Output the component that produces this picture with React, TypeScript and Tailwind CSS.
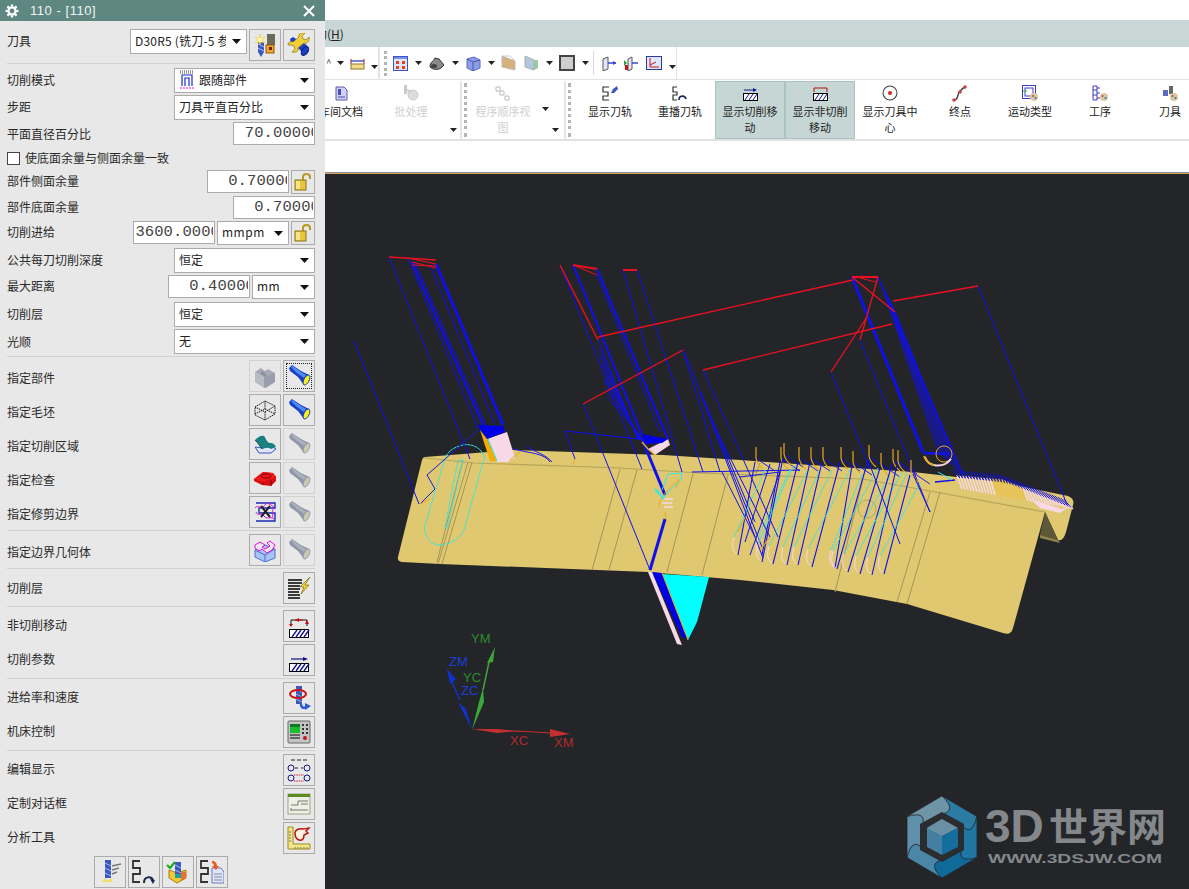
import React from "react";

type N = React.ReactNode;
const S = ({ children, size = 24, box = "0 0 24 24" }: { children: N; size?: number; box?: string }) => (
  <svg width={size} height={size} viewBox={box} className="block shrink-0">{children}</svg>
);

const Caret = () => (
  <svg width="9" height="5" viewBox="0 0 9 5" className="block shrink-0"><path d="M0 0h9L4.5 5z" fill="#111" /></svg>
);
const Mini = () => (
  <svg width="7" height="4" viewBox="0 0 7 4" className="block shrink-0"><path d="M0 0h7L3.5 4z" fill="#222" /></svg>
);

const Flash = ({ off }: { off?: boolean }) => (
  <S>
    <path d="M2 4 5 1 14 7l8 4-5 10-6-8-8-6z" fill={off ? "#8f97a8" : "#1a3fc8"} />
    <path d="M4 3 5.500 2 14 8l5 3-2 3-7-5z" fill={off ? "#aab0bd" : "#4d8cf0"} />
    <ellipse cx="19.500" cy="16" rx="5.500" ry="2.600" transform="rotate(-63 19.500 16)" fill={off ? "#c9cbb0" : "#f3ef2a"} stroke={off ? "#8f97a8" : "#13309a"} strokeWidth=".8" />
  </S>
);
const Block = () => (
  <S>
    <path d="M2 8l6-4 4 3 3-2 7 4v9l-9 6-11-6z" fill="#a7abb8" />
    <path d="M2 8l9 5v11L2 18z" fill="#b8bcc6" />
    <path d="M11 13l11-4v9l-11 6z" fill="#9a9eac" />
    <path d="M8 7l5 3v3l-5-3z" fill="#8a8e9c" />
  </S>
);
const Wire = () => (
  <S>
    <path d="M2 9l10-6 10 5v8l-10 6-10-5zM2 9l10 5 10-6M12 14v8M2 16l10-5 10 5M12 3v8" fill="none" stroke="#111" strokeWidth="1" strokeDasharray="1.400 .8" />
  </S>
);
const Surface = () => (
  <S>
    <path d="M2 15 6 21h12l5-4-5-3-8 2z" fill="#dfe6fb" stroke="#3a54c8" />
    <path d="M2 8c3-3 6-5 9-4 2 2 2 6 6 7 2 0 4 0 6 4l-5 2c-4-2-5-1-9 0-2-3-4-6-7-9z" fill="#1a8080" />
    <path d="M2 8c3 3 5 6 7 9" stroke="#0a5050" fill="none" />
  </S>
);
const Chip = () => (
  <S>
    <path d="M1 13 10 6l10 1 3 4v4l-5 5-9-1-8-4z" fill="#d80f0f" />
    <path d="M1 13l9 3 13-5-3-4-10-1z" fill="#f01818" />
    <ellipse cx="13" cy="10" rx="5" ry="2" fill="none" stroke="#7a0000" />
    <path d="M10 16v3M18 14v6" stroke="#8a0000" />
  </S>
);
const Trim = () => (
  <S>
    <path d="M3 3h19v5H6v5h16v8H3" fill="none" stroke="#1a2bb8" strokeWidth="1.400" />
    <path d="M2 8c3-4 6 2 9-2s4-3 10 1M3 12c2 5 5 0 8 4s6 0 10 3M21 8c-3 3 0 6-2 10" fill="none" stroke="#e014d8" strokeWidth="1" />
    <path d="M8 6l9 11M17 6 8 17" stroke="#222" strokeWidth="2" />
  </S>
);
const BoundGeo = () => (
  <S>
    <path d="M2 12 12 7l10 4v9l-10 4-10-5z" fill="#a9c4f3" stroke="#4c6fd0" />
    <path d="M2 12l10 5 10-6M12 17v7" fill="none" stroke="#4c6fd0" />
    <path d="M2 7l5-3 5 3-3 2 3 2 5-3-3-3 3-2 5 4-3 5-5 3-5-4-3 2-4-3z" fill="#f4e4f6" stroke="#e014d8" />
  </S>
);
const Layers = () => (
  <S>
    <path d="M1 4h14M1 7h14M1 10h12M1 13h12M1 16h11M1 19h12M1 22h12" stroke="#000" strokeWidth="1.600" />
    <path d="M23 1 13 11h4l-3 7 8-9h-4z" fill="#f0cf30" stroke="#6a5a10" strokeWidth=".6" />
  </S>
);
const Hatch = () => (
  <>
    <rect x="3.500" y="16.500" width="19" height="8" fill="#fff" stroke="#000" />
    <path d="M6 24l5-7M10 24l5-7M14 24l5-7M18 24l5-7" stroke="#12128a" strokeWidth="1.300" />
  </>
);
const NonCut = () => (
  <S box="0 0 26 26" size={26}>
    <Hatch />
    <path d="M5 7h16M5 7v6M21 7v6" stroke="#111" fill="none" />
    <path d="M9 7l4-2v4zM3 11h4l-2 3zM19 11h4l-2-4z" fill="#c80f0f" />
    <path d="M9 7h8" stroke="#c80f0f" />
  </S>
);
const CutParam = () => (
  <S box="0 0 26 26" size={26}>
    <Hatch />
    <path d="M5 12h14" stroke="#12128a" strokeWidth="1.200" />
    <path d="M17 10l5 2-5 2z" fill="#12128a" />
  </S>
);
const Feed = () => (
  <S>
    <rect x="9" y="0" width="6" height="18" fill="#4058b8" />
    <path d="M9 3l6 3M9 8l6 3M9 13l6 3" stroke="#9aa8e0" />
    <ellipse cx="11" cy="8" rx="8" ry="4" fill="none" stroke="#c81414" strokeWidth="2" />
    <path d="M14 18c0 5 4 4 6 3" stroke="#2a5ad8" strokeWidth="2.400" fill="none" />
    <path d="M18 17l6 3-6 4z" fill="#2a5ad8" />
  </S>
);
const Machine = () => (
  <S>
    <rect x="1" y="1" width="22" height="22" rx="1" fill="#c4c4c4" stroke="#666" />
    <rect x="3" y="4" width="10" height="9" fill="#18c030" />
    <rect x="3" y="4" width="10" height="3" fill="#0b7a20" />
    <path d="M15 4h2v2h-2zM19 4h2v2h-2zM15 8h2v2h-2zM19 8h2v2h-2zM15 12h2v2h-2zM19 12h2v2h-2z" fill="#333" />
    <path d="M3 15h10M3 18h10" stroke="#444" strokeWidth="1.500" />
    <circle cx="18" cy="18" r="2" fill="#c81414" />
  </S>
);
const EditShow = () => (
  <S>
    <path d="M4 2h4M10 2h4M16 2h4" stroke="#222" />
    <circle cx="4" cy="10" r="3" fill="none" stroke="#12128a" /><circle cx="20" cy="10" r="3" fill="none" stroke="#12128a" />
    <path d="M8 10h3M14 10h2" stroke="#222" />
    <circle cx="4" cy="20" r="3" fill="none" stroke="#12128a" /><circle cx="20" cy="20" r="3" fill="none" stroke="#12128a" />
    <path d="M7 17h10M7 23h10" stroke="#d01010" strokeDasharray="1.400 1" />
  </S>
);
const Dialog = () => (
  <S>
    <rect x="1" y="2" width="22" height="20" fill="#eef0e4" stroke="#9aa888" />
    <rect x="1" y="2" width="22" height="3" fill="#5a8a20" />
    <path d="M4 13h7v-4h10M4 18h17M4 19v-3M14 12h7" fill="none" stroke="#777" />
  </S>
);
const Analysis = () => (
  <S>
    <path d="M1 1h5v17h17v5H1z" fill="#f5e68a" stroke="#a08a20" />
    <path d="M8 21v2M11 21v2M14 21v2M17 21v2M20 21v2M2 6h2M2 9h2M2 12h2M2 15h2" stroke="#775" />
    <path d="M8 7c0-3 4-5 8-4 2 0 5-1 6-1l-3 3 2 2-4 2c0 4-2 6-5 5-3-1-4-4-4-7z" fill="#fff4e0" stroke="#c01010" strokeWidth="1.500" />
  </S>
);
const NewTool = () => (
  <S>
    <path d="M5 9h6v10l-3 5-3-5z" fill="#3a58c0" />
    <path d="M5 11l6 3M5 15l6 3" stroke="#a8b8f0" />
    <rect x="14" y="1" width="8" height="11" fill="#6b6b5a" />
    <rect x="13" y="12" width="8" height="8" fill="#f0a830" stroke="#8a5a10" />
    <rect x="16" y="14" width="3" height="3" fill="#702010" />
    <path d="M7 1l1 4 4-1-3 3 3 3-4-1-1 3-1-3-4 1 3-3-3-3 4 1z" fill="#fff8a0" stroke="#e8c020" strokeWidth=".5" />
  </S>
);
const Wrench = () => (
  <S>
    <path d="M3 6 6 4 14 9l6 3-3 9-6-6-7-5z" fill="#1a3fc8" />
    <ellipse cx="18" cy="18" rx="5" ry="3" transform="rotate(-55 18 18)" fill="#1840c0" stroke="#0a1a70" />
    <path d="M1 12c0-3 3-4 5-3l6-5c-1-3 2-5 6-4l-3 3 1 3 3 1 3-3c1 4-2 7-5 6l-6 5c1 3-2 5-6 4l3-3-1-3-3-1z" fill="#f3cf36" stroke="#8a7010" strokeWidth=".7" />
  </S>
);
const Lock = () => (
  <S size={20} box="0 0 20 20">
    <path d="M10 8V5c0-4 7-4 7 0v2" fill="none" stroke="#b69a20" strokeWidth="2" />
    <rect x="2" y="8" width="11" height="10" fill="#e8c63c" stroke="#8a7010" />
    <rect x="3" y="9" width="4" height="8" fill="#f5e58a" />
  </S>
);
const BotA = () => (
  <S>
    <rect x="7" y="0" width="6" height="18" fill="#3a58c0" />
    <path d="M7 3l6 3M7 8l6 3M7 13l6 3" stroke="#a8b8f0" />
    <path d="M14 6l9-2M14 10l7-2M14 14l5-2" stroke="#777" strokeWidth="1.400" />
    <path d="M4 22l3-4 3 3 3-3 2 4z" fill="#f0e060" />
  </S>
);
const SPath = ({ x = 0, w = 1.8, c = "#333" }: { x?: number; w?: number; c?: string }) => (
  <path d={`M${x + 8} 1H${x + 1}v7h7v6H${x + 1}v8h7`} fill="none" stroke={c} strokeWidth={w} />
);
const BotB = () => (
  <S>
    <SPath />
    <path d="M12 23c0-7 7-7 9-3" fill="none" stroke="#1a2450" strokeWidth="2" />
    <path d="M18 19l5 1-2 4z" fill="#1a2450" />
  </S>
);
const BotC = () => (
  <S>
    <path d="M3 18V10l8 3 9-3v8l-9 5z" fill="#f0c830" stroke="#a08010" />
    <rect x="9" y="2" width="6" height="15" fill="#3a58c0" />
    <path d="M9 5l6 3M9 10l6 3" stroke="#a8b8f0" />
    <path d="M9 14h6v4H9z" fill="#20a0a0" />
    <path d="M15 12h5v6l-5 3z" fill="#e87030" />
    <path d="M1 5l3 3 5-6" fill="none" stroke="#18a818" strokeWidth="2" />
  </S>
);
const BotD = () => (
  <S>
    <SPath />
    <path d="M12 8h9l3 4v11H12z" fill="#dfe6fb" stroke="#6a7ac0" />
    <path d="M14 14h8M14 17h8M14 20h8" stroke="#889" />
    <path d="M12 1c3 0 5 2 5 5h2l-3 4-4-4h2c0-1-1-3-2-3z" fill="#e85a20" />
  </S>
);

const Btn = ({ children, off, focus }: { children?: N; off?: boolean; focus?: boolean }) => (
  <div className={`relative w-8 h-8 shrink-0 flex items-center justify-center border ${off ? "border-[#d2d2d2]" : "border-[#ababab]"}`}>
    {focus && <div className="absolute inset-[2px] border border-dotted border-[#222]" />}
    {children}
  </div>
);

const Sel = ({ w, h = "h-[25px]", children, mono }: { w: string; h?: string; children: N; mono?: boolean }) => (
  <div className={`${w} ${h} shrink-0 bg-white border border-[#ababab] flex items-center pl-[4px] pr-[5px] gap-[2px] overflow-hidden`}>
    <div className={`flex-1 min-w-0 flex items-center gap-[4px] overflow-hidden whitespace-nowrap text-[#222] pb-[2px] ${mono ? "text-[12px] tracking-[0.5px]" : "text-[12px]"}`}>{children}</div>
    <Caret />
  </div>
);

const Num = ({ w, v, h = "h-[23px]" }: { w: string; v: string; h?: string }) => (
  <div className={`${w} ${h} shrink-0 bg-white border border-[#ababab] flex items-center pr-[1px]`}>
    <div className="flex-1 min-w-0 h-full overflow-hidden flex justify-end items-center pt-[1px]">
      <span className="font-['Liberation_Mono',monospace] text-[15.5px] tracking-[0.1px] text-[#444] whitespace-nowrap mr-[-7px]">{v}0</span>
    </div>
  </div>
);

const LockBtn = () => (
  <div className="w-6 h-6 shrink-0 border border-[#ababab] flex items-center justify-center"><Lock /></div>
);

const Row = ({ h, label, lift = "pb-[4px]", children }: { h: string; label: N; lift?: string; children?: N }) => (
  <div className={`${h} flex items-start gap-[2px] shrink-0`}>
    <span className={`self-center mr-auto text-[12px] leading-none text-[#2a2a2a] whitespace-nowrap ${lift}`}>{label}</span>
    {children}
  </div>
);

const Sep = ({ mb = "mb-[3px]" }: { mb?: string }) => <div className={`h-px bg-[#d2d2d2] shrink-0 ${mb}`} />;

const BtnRow = ({ label, a, b, aOff, bOff, focus, lift = "pt-[2px]" }: { label: N; a?: N; b: N; aOff?: boolean; bOff?: boolean; focus?: boolean; lift?: string }) => (
  <Row h="h-[34px]" label={label} lift={lift}>
    {a && <Btn off={aOff}>{a}</Btn>}
    <Btn off={bOff} focus={focus}>{b}</Btn>
  </Row>
);

const ModeIcon = () => (
  <svg width="16" height="19" viewBox="0 0 16 19" className="block shrink-0">
    <path d="M1 1h14M1 3h14" stroke="#333" strokeDasharray="1 1" />
    <path d="M3 16V5h10v11M6 16V8h4v8" fill="none" stroke="#1a2bd0" strokeWidth="1.200" />
    <path d="M1 18h14" stroke="#e010e0" strokeDasharray="2 1" />
  </svg>
);

const Panel = () => (
  <aside className="w-[325px] h-[889px] shrink-0 bg-[#e8e8e8] flex flex-col font-['Noto_Sans_CJK_SC','Liberation_Sans',sans-serif] overflow-hidden">
    <div className="h-[21px] shrink-0 bg-[#5d8780] flex items-center pl-[5px] pr-[10px] text-white">
      <svg width="14" height="14" viewBox="0 0 14 14" className="block">
        <circle cx="7" cy="7" r="3.600" fill="none" stroke="#fff" strokeWidth="2.400" />
        <path d="M7 .5v2M7 11.500v2M.5 7h2M11.500 7h2M2.400 2.400l1.400 1.400M10.200 10.200l1.400 1.400M2.400 11.600l1.400-1.400M10.200 3.800l1.400-1.400" stroke="#fff" strokeWidth="2.200" />
      </svg>
      <span className="ml-[11px] font-['Liberation_Sans',sans-serif] text-[13px] tracking-[0.55px] text-[#f0f5f4]">110 - [110]</span>
      <svg width="12" height="12" viewBox="0 0 12 12" className="block ml-auto"><path d="M1 1l10 10M11 1 1 11" stroke="#fff" strokeWidth="2" /></svg>
    </div>
    <div className="flex flex-col pl-[7px] pr-[10px] pt-2 flex-1">
      <Row h="h-8" label="刀具" lift="pb-[8px]">
        <div className="w-[117px] h-[25px] bg-white border border-[#ababab] flex items-center pl-[4px] pr-[5px] shrink-0">
          <div className="flex-1 min-w-0 overflow-hidden whitespace-nowrap text-[12px] text-[#222] tracking-[0.2px] mr-[6px] pb-[1px]">D30R5 (铣刀-5 参数)</div>
          <Caret />
        </div>
        <Btn><NewTool /></Btn>
        <Btn><Wrench /></Btn>
      </Row>
      <div className="mt-[2px]"><Sep mb="mb-[4px]" /></div>
      <Row h="h-[27px]" label="切削模式"><Sel w="w-[141px]"><ModeIcon /><span>跟随部件</span></Sel></Row>
      <Row h="h-[27px]" label="步距" lift="pb-[3px]"><Sel w="w-[141px]">刀具平直百分比</Sel></Row>
      <Row h="h-[27px]" label="平面直径百分比"><Num w="w-[82px]" v="70.0000" /></Row>
      <div className="h-[21px] shrink-0 flex items-center gap-[5px] pb-[3px]">
        <div className="w-[13px] h-[13px] bg-white border border-[#444]" />
        <span className="text-[12px] leading-none text-[#2a2a2a]">使底面余量与侧面余量一致</span>
      </div>
      <Row h="h-[26px]" label="部件侧面余量"><Num w="w-[82px]" v="0.7000" /><LockBtn /></Row>
      <Row h="h-[25px]" label="部件底面余量"><Num w="w-[82px]" v="0.7000" /></Row>
      <Row h="h-[27px]" label="切削进给" lift="pb-[5px]"><Num w="w-[82px]" v="3600.000" /><Sel w="w-[72px]" h="h-[24px]" mono>mmpm</Sel><LockBtn /></Row>
      <Row h="h-[27px]" label="公共每刀切削深度"><Sel w="w-[141px]">恒定</Sel></Row>
      <Row h="h-[27px]" label="最大距离" lift="pb-[5px]"><Num w="w-[82px]" v="0.4000" /><Sel w="w-[63px]" h="h-[24px]" mono>mm</Sel></Row>
      <Row h="h-[27px]" label="切削层"><Sel w="w-[141px]">恒定</Sel></Row>
      <Row h="h-[27px]" label="光顺" lift="pb-[2px]"><Sel w="w-[141px]">无</Sel></Row>
      <Sep />
      <BtnRow label="指定部件" a={<Block />} aOff b={<Flash />} focus />
      <BtnRow label="指定毛坯" a={<Wire />} b={<Flash />} />
      <BtnRow label="指定切削区域" a={<Surface />} b={<Flash off />} bOff />
      <BtnRow label="指定检查" a={<Chip />} b={<Flash off />} bOff />
      <BtnRow label="指定修剪边界" a={<Trim />} b={<Flash off />} bOff />
      <Sep />
      <BtnRow label="指定边界几何体" a={<BoundGeo />} b={<Flash off />} bOff />
      <Sep />
      <BtnRow label="切削层" b={<Layers />} lift="pb-[2px]" />
      <Sep />
      <BtnRow label="非切削移动" b={<NonCut />} lift="pb-[4px]" />
      <BtnRow label="切削参数" b={<CutParam />} lift="pb-[4px]" />
      <Sep />
      <BtnRow label="进给率和速度" b={<Feed />} lift="pb-[4px]" />
      <BtnRow label="机床控制" b={<Machine />} lift="pb-[4px]" />
      <Sep />
      <BtnRow label="编辑显示" b={<EditShow />} lift="pb-[4px]" />
      <BtnRow label="定制对话框" b={<Dialog />} lift="pb-[4px]" />
      <BtnRow label="分析工具" b={<Analysis />} lift="pb-[4px]" />
      <div className="flex gap-[2px] pl-[87px]">
        <Btn><BotA /></Btn><Btn><BotB /></Btn><Btn><BotC /></Btn><Btn><BotD /></Btn>
      </div>
    </div>
  </aside>
);

const Grip = () => (
  <div className="w-[3px] h-[25px] shrink-0 border-l-[3px] border-dotted border-[#b5b5b5]" />
);

const Toolbar = () => (
  <div className="h-[33px] shrink-0 bg-white flex items-stretch border-b border-[#e4e4e4]">
    <div className="w-[55px] shrink-0 flex items-center border-r-2 border-[#e4e4e4] overflow-hidden">
      <span className="w-[10px] ml-[1px] text-[10px] leading-none text-[#444]">^</span>
      <div className="ml-[1px]"><Mini /></div>
      <div className="ml-[6px]">
        <svg width="15" height="15" viewBox="0 0 15 15" className="block"><path d="M1 3v5M14 3v5" stroke="#c01818" /><path d="M1 5h13" stroke="#1a2bb8" strokeWidth="1.200" /><rect x="1" y="8" width="13" height="5" fill="#f3dc8a" stroke="#8a7a30" /></svg>
      </div>
      <div className="ml-[6px] mt-2"><Mini /></div>
    </div>
    <div className="w-[2px] shrink-0 bg-white" />
    <div className="w-[295px] shrink-0 flex items-center pl-[2px] border-r border-[#e4e4e4]">
      <Grip />
      <div className="ml-[6px]">
        <svg width="15" height="15" viewBox="0 0 15 15" className="block"><rect x=".5" y=".5" width="14" height="14" fill="#dfe6fb" stroke="#3a54c8" /><rect x="1" y="1" width="13" height="2" fill="#7a8fe0" /><path d="M3 5h3v3H3zM9 5h3v3H9zM3 10h3v3H3zM9 10h3v3H9z" fill="#e84020" /></svg>
      </div>
      <div className="ml-[7px]"><Mini /></div>
      <div className="ml-[7px]">
        <svg width="16" height="14" viewBox="0 0 16 14" className="block"><path d="M1 11c0-5 3-5 5-9l4 1 5 6-3 3c-3 2-8 2-11-1z" fill="#8a8a8a" stroke="#333" /><ellipse cx="5" cy="10" rx="3" ry="2" fill="#444" /></svg>
      </div>
      <div className="ml-[7px]"><Mini /></div>
      <div className="ml-[7px]">
        <svg width="15" height="15" viewBox="0 0 15 15" className="block"><path d="M1 3l7-2 6 3v8l-7 3-6-3z" fill="#8a9ee8" stroke="#5a6ac0" /><path d="M1 3l6 3 7-2M7 6v9" fill="none" stroke="#4a58b0" /></svg>
      </div>
      <div className="ml-[7px]"><Mini /></div>
      <div className="ml-[6px]">
        <svg width="15" height="16" viewBox="0 0 15 16" className="block"><path d="M1 1l13 5v9L1 12z" fill="#d8b07a" stroke="#bbb" /><path d="M1 1l8 0 5 5" fill="none" stroke="#ccc" /></svg>
      </div>
      <div className="ml-[8px]">
        <svg width="15" height="16" viewBox="0 0 15 16" className="block"><path d="M1 1l9 4v10L1 12z" fill="#b0c8e0" stroke="#aaa" /><path d="M10 5l4 0v8l-4 2z" fill="#9ac8a0" /></svg>
      </div>
      <div className="ml-[7px]"><Mini /></div>
      <div className="ml-[6px] w-4 h-4 bg-[#cfcfcf] border-2 border-[#444]" />
      <div className="ml-[7px]"><Mini /></div>
      <div className="ml-[4px] w-px h-[24px] bg-[#dcdcdc]" />
      <div className="ml-[8px]">
        <svg width="15" height="15" viewBox="0 0 15 15" className="block"><path d="M1 3l5-2v12l-5 2z" fill="#dfe6fb" stroke="#555" /><path d="M6 7h8" stroke="#2a3ad8" strokeWidth="1.400" /><path d="M11 5l3 2-3 2z" fill="#2a3ad8" /></svg>
      </div>
      <div className="ml-[6px]">
        <svg width="16" height="15" viewBox="0 0 16 15" className="block"><path d="M5 3l4-2v12l-4 2z" fill="#dfe6fb" stroke="#555" /><path d="M9 7h6" stroke="#2a3ad8" strokeWidth="1.400" /><path d="M1 4l3 3-3 3z" fill="#18a838" /><path d="M2 9h3v5H2z" fill="#c81414" /></svg>
      </div>
      <div className="ml-[7px]">
        <svg width="16" height="14" viewBox="0 0 16 14" className="block"><rect x=".5" y=".5" width="15" height="13" fill="#dfe6fb" stroke="#2a3a98" /><path d="M4 2v9h9" stroke="#c81414" fill="none" /><path d="M4 9l6-3" stroke="#c81414" /></svg>
      </div>
      <div className="ml-[7px] mt-2"><Mini /></div>
    </div>
  </div>
);

const RB = ({ icon, lines, active, off, w = "w-[70px]" }: { icon: N; lines: string[]; active?: boolean; off?: boolean; w?: string }) => (
  <div className={`${w} shrink-0 h-[58px] flex flex-col items-center pt-[2px] border ${active ? "bg-[#c6d6d4] border-[#a8c4c0]" : "border-transparent"} ${off ? "text-[#cfcfcf]" : "text-[#222]"}`}>
    <div className="h-[18px] flex items-center justify-center">{icon}</div>
    <div className="mt-[1px] text-center text-[11px] leading-4 whitespace-nowrap">
      {lines.map((l) => <div key={l}>{l}</div>)}
    </div>
  </div>
);

const Multi = ({ a = "#3a3ac0" }: { a?: string }) => (
  <svg width="17" height="17" viewBox="0 0 17 17" className="block">
    <path d="M1 1h4v14H1zM1 5h4M1 10h4M5 3h3M5 8h3M5 13h3" fill="#fff" stroke={a} />
    <circle cx="12" cy="12" r="4" fill="#d8c8a0" />
    <circle cx="10.500" cy="11" r="1" fill="#d04040" /><circle cx="13.500" cy="13" r="1" fill="#3070c0" />
  </svg>
);

const Ribbon = () => (
  <div className="h-[61px] shrink-0 bg-white flex items-start pt-[1px] border-b-2 border-[#e2e2e2] -ml-[19px] font-['Noto_Sans_CJK_SC','Liberation_Sans',sans-serif] overflow-hidden">
    <RB
      lines={["车间文档"]}
      icon={<svg width="13" height="15" viewBox="0 0 13 15" className="block"><path d="M1 1h8l3 3v10H1z" fill="#cfd2f3" stroke="#5a5ab0" /><rect x="3" y="3" width="3" height="6" fill="#4a4ab0" /><path d="M3 11h7" stroke="#4a4ab0" /></svg>}
    />
    <RB off lines={["批处理"]} icon={<svg width="16" height="16" viewBox="0 0 16 16" className="block"><rect x="1" y="0" width="3" height="9" fill="#c9c9c9" /><circle cx="10" cy="10" r="5" fill="#ddd" stroke="#ccc" /><path d="M4 5l4 2" stroke="#ccc" strokeWidth="2" /></svg>} />
    <div className="w-[14px] h-[58px] relative shrink-0"><div className="absolute right-[3px] top-[47px]"><Mini /></div></div>
    <div className="w-[2px] h-[59px] bg-[#e6e6e6] shrink-0 mr-[2px]" />
    <div className="pt-[2px]"><div className="w-[3px] h-[54px] border-l-[3px] border-dotted border-[#b5b5b5]" /></div>
    <div className="relative w-[97px] shrink-0">
      <RB w="w-[72px]" off lines={["程序顺序视", "图"]} icon={<svg width="16" height="15" viewBox="0 0 16 15" className="block"><path d="M1 1h4v4H1zM5 5h4v4H5zM10 10h4v4h-4z" fill="none" stroke="#bbb" /></svg>} />
      <div className="absolute left-[75px] top-[26px]"><Mini /></div>
      <div className="absolute left-[85px] top-[47px]"><Mini /></div>
    </div>
    <div className="w-[2px] h-[59px] bg-[#e6e6e6] shrink-0 mr-[2px]" />
    <div className="pt-[2px]"><div className="w-[3px] h-[54px] border-l-[3px] border-dotted border-[#b5b5b5]" /></div>
    <div className="w-[4px] shrink-0" />
    <RB lines={["显示刀轨"]} icon={<svg width="16" height="15" viewBox="0 0 16 15" className="block"><path d="M7 1H1v5h5v4H1v4h6" fill="none" stroke="#333" strokeWidth="1.200" /><path d="M9 7l2-4 4-3 1 3-4 4z" fill="#3a58c0" /></svg>} />
    <RB lines={["重播刀轨"]} icon={<svg width="16" height="15" viewBox="0 0 16 15" className="block"><path d="M5 1H1v5h4v3H1v5h4" fill="none" stroke="#333" strokeWidth="1.200" /><path d="M7 14c0-5 6-5 7-1" fill="none" stroke="#1a2450" strokeWidth="1.600" /></svg>} />
    <RB active lines={["显示切削移", "动"]} icon={<svg width="15" height="15" viewBox="0 0 15 15" className="block"><path d="M1 4h11" stroke="#12128a" /><path d="M10 2l4 2-4 2z" fill="#12128a" /><rect x=".5" y="7.500" width="14" height="7" fill="#fff" stroke="#000" /><path d="M2 14l4-6M6 14l4-6M10 14l4-6" stroke="#12128a" /></svg>} />
    <RB active lines={["显示非切削", "移动"]} icon={<svg width="15" height="15" viewBox="0 0 15 15" className="block"><path d="M1 6V2h13v4" fill="none" stroke="#b01010" /><rect x=".5" y="7.500" width="14" height="7" fill="#fff" stroke="#000" /><path d="M2 14l4-6M6 14l4-6M10 14l4-6" stroke="#12128a" /></svg>} />
    <RB lines={["显示刀具中", "心"]} icon={<svg width="16" height="16" viewBox="0 0 16 16" className="block"><circle cx="8" cy="8" r="7" fill="#fff" stroke="#444" strokeWidth="1.100" /><circle cx="8" cy="8" r="2" fill="#d82020" /></svg>} />
    <RB lines={["终点"]} icon={<svg width="16" height="17" viewBox="0 0 16 17" className="block"><path d="M2 15c5 0 3-7 6-9 2-2 3-3 5-4" fill="none" stroke="#444" strokeWidth="1.400" /><circle cx="2" cy="15" r="1.800" fill="#d04040" /><circle cx="8" cy="7" r="1.800" fill="#d04040" /><circle cx="13" cy="2" r="1.800" fill="#d04040" /></svg>} />
    <RB lines={["运动类型"]} icon={<svg width="17" height="17" viewBox="0 0 17 17" className="block"><rect x=".5" y=".5" width="13" height="13" fill="#fff" stroke="#3a3ac0" /><rect x="3" y="3" width="8" height="8" fill="none" stroke="#3a3ac0" /><path d="M1 6h4" stroke="#18c018" /><circle cx="12" cy="12" r="4" fill="#d8c8a0" /><circle cx="11" cy="11" r="1" fill="#d04040" /><circle cx="13.500" cy="13" r="1" fill="#3070c0" /></svg>} />
    <RB lines={["工序"]} icon={<Multi />} />
    <RB lines={["刀具"]} icon={<svg width="17" height="17" viewBox="0 0 17 17" className="block"><rect x="1" y="5" width="5" height="6" fill="#5a6ac0" /><rect x="7" y="1" width="4" height="8" fill="#666" /><circle cx="12" cy="12" r="4" fill="#d8c8a0" /><circle cx="10.500" cy="11" r="1" fill="#d04040" /><circle cx="13.500" cy="13" r="1" fill="#3070c0" /></svg>} />
  </div>
);

type P = [number, number, number, number, number?];
const blue: P[] = [
  [354, 339, 419, 502], [389, 255, 470, 457], [408, 256, 478, 427], [412, 260, 483, 423, 2], [415, 260, 486, 423, 1],
  [436, 262, 503, 423, 3], [430, 263, 495, 423], [573, 263, 642, 433, 2], [597, 267, 668, 437, 2], [560, 263, 642, 467],
  [597, 273, 660, 430], [623, 268, 682, 470], [637, 268, 703, 470], [683, 348, 720, 470], [683, 348, 755, 520],
  [703, 368, 778, 535], [583, 402, 650, 568], [565, 429, 640, 437], [565, 429, 575, 457], [642, 437, 665, 493, 3],
  [665, 517, 650, 568, 3], [978, 284, 1068, 505], [852, 275, 923, 450, 3], [878, 275, 963, 473, 1.5], [831, 370, 870, 467],
  [860, 338, 930, 510], [700, 390, 762, 545], [722, 470, 755, 535], [692, 470, 800, 468], [740, 475, 780, 470],
  [923, 451, 950, 452, 2.5], [935, 480, 955, 478, 1.5],
];
const red: P[] = [
  [389, 255, 436, 258, 1.6], [408, 256, 436, 262], [412, 260, 436, 266], [412, 263, 436, 264],
  [560, 263, 598, 338, 1.4], [598, 335, 853, 278, 1.4], [583, 402, 683, 348, 1.4], [703, 368, 892, 322, 1.4],
  [573, 263, 597, 267, 2], [573, 263, 597, 273], [623, 268, 637, 268, 2],
  [852, 275, 878, 275, 2], [852, 275, 895, 310, 1.3], [878, 275, 860, 338, 1.3], [867, 315, 831, 370, 1.3],
  [893, 299, 978, 284, 1.3], [860, 276, 876, 280],
];
const stripes: [number, number, number, number][] = [
  [755, 460, 738, 553], [780, 460, 762, 553], [783, 456, 762, 560], [798, 460, 773, 562], [810, 460, 787, 563],
  [822, 460, 798, 563], [840, 460, 812, 565], [852, 464, 835, 566], [868, 458, 837, 567], [880, 466, 848, 570],
  [892, 462, 860, 572], [897, 463, 872, 573], [910, 473, 884, 572],
];

const hexPt = (r: number, i: number) => {
  const a = ((-90 + i * 60) * Math.PI) / 180;
  return [942 + r * 1.12 * Math.cos(a), 835 + r * 1.14 * Math.sin(a)];
};
const bladeColors = ["#2b7ba3", "#1f76a0", "#0f6a9a", "#4a86a6", "#5f90aa", "#6f94a8"];

const Canvas = () => (
  <div className="flex-1 min-h-0 bg-[#232529] overflow-hidden">
    <svg width="864" height="717" viewBox="325 172 864 717" className="block">
      <path d="M425 455 513 448 663 453 740 458 767 460 913 470 1000 480 1068 494Q1075 497 1073 503L1066 530Q1063 540 1058 538L1045 510 1013 626Q1011 634 1003 631L907 602 833 588 740 578 648 570 440 562 402 560Q397 559 398 555L422 458Q423 455 425 455Z" fill="#dfc86f" />
      <path d="M1045 510 1040 533 1058 538Z" fill="#5f5836" />
      <path d="M1040 533 1058 538 1060 541 1040 536Z" fill="#8f8450" />
      <path d="M425 456 474 461 620 466 650 468 700 471 863 477 930 489 1045 510" fill="none" stroke="#b5a45c" strokeWidth="1.200" />
      {[[472, 460, 442, 562], [468, 460, 438, 562], [463, 458, 437, 560], [620, 467, 592, 568], [637, 468, 609, 568], [693, 472, 667, 570], [728, 473, 702, 573], [863, 477, 835, 590], [930, 490, 897, 600], [940, 490, 907, 602], [760, 461, 755, 475]].map((l, i) => (
        <line key={i} x1={l[0]} y1={l[1]} x2={l[2]} y2={l[3]} stroke="#a3955a" strokeWidth="1" />
      ))}
      <circle cx="867" cy="507" r="9" fill="none" stroke="#b5a45c" />

      <path d="M485 457C483 447 473 441 463 443 450 446 446 452 444 460L425 523C423 536 432 544 442 543 452 541 460 537 464 528L483 460Z" fill="none" stroke="#2fe8e8" strokeWidth="1" strokeDasharray="3 .6" />
      <path d="M463 458 458 458 445 525 447 527Z" fill="none" stroke="#2fe8e8" strokeWidth="1" strokeDasharray="3 .6" />
      <path d="M478 428 453 450 427 473 435 487 420 502" fill="none" stroke="#1a1adf" />
      <path d="M420 502 430 497" fill="none" stroke="#e8a820" />
      <path d="M513 447 527 450C540 452 547 455 550 460M526 444C535 450 545 452 552 460" fill="none" stroke="#1a1adf" />
      <path d="M575 457 573 462" stroke="#e8a820" />

      <path d="M662 572 709 575 697 620 688 638Z" fill="#00ffff" />
      <path d="M652 570 662 571 687 637 682 635Z" fill="#0000e8" />
      <path d="M662 571 688 638" stroke="#f5ac00" />
      <path d="M648 570 652 570 682 643 677 642Z" fill="#f7d8e6" />

      {blue.map((l, i) => (
        <line key={i} x1={l[0]} y1={l[1]} x2={l[2]} y2={l[3]} stroke="#1010ee" strokeWidth={l[4] ?? 1} />
      ))}
      {Array.from({ length: 10 }, (_, i) => (
        <line key={i} x1={880 + i * 1.6} y1={279 + i * 3.2} x2={938 + i * 2.5} y2={450 + i * 2.4} stroke="#1010ee" strokeWidth=".7" />
      ))}
      {Array.from({ length: 8 }, (_, i) => (
        <line key={i} x1={598 + i * 1.2} y1={338 + i * 8} x2={638 + i * 0.8} y2={438} stroke="#1010ee" strokeWidth="1" />
      ))}

      <path d="M487 437 507 430 515 456 507 460 497 460Z" fill="#f7d8e6" />
      <path d="M478 423 503 424 505 430 487 437 480 427Z" fill="#0000e8" />
      <path d="M480 428 487 437 497 459 490 459Z" fill="#f5ac00" />
      <path d="M488 437 497 459" stroke="#2fe8e8" />
      <path d="M510 458 520 450" stroke="#e8a820" />

      <path d="M648 447 668 437 670 443 655 453Z" fill="#f7d8e6" />
      <path d="M642 432 668 437 662 441 646 442Z" fill="#0000e8" />
      <path d="M642 440 648 447 655 453" stroke="#e8a820" fill="none" strokeWidth="1.400" />
      <path d="M668 472 682 471 681 478 668 490 664 495M668 472 662 488" fill="none" stroke="#2fe8e8" />
      <path d="M660 505C656 498 668 488 678 478 680 474 678 482 676 486" fill="none" stroke="#e8a820" />
      <path d="M663 497h10M662 501h10M664 505h9" stroke="#f7d8e6" strokeWidth="1.300" />
      <path d="M655 487 664 497" stroke="#2fe8e8" strokeWidth="2" />
      <path d="M665 510 667 520" stroke="#e8a820" />

      {stripes.map((s, i) => (
        <g key={i}>
          <line x1={s[0]} y1={s[1]} x2={s[2]} y2={s[3]} stroke="#1010ee" strokeWidth="1.100" />
          <path d={`M${s[0] + 10} ${s[1] + 8} L${s[2] - 4} ${s[3] - 18}`} stroke="#2fe8e8" strokeDasharray="3 .6" fill="none" />
          <path d={`M${s[2] - 4} ${s[3] - 18} Q${s[2] - 8} ${s[3] - 5} ${s[2] - 1} ${s[3] - 1}`} stroke="#f7d8e6" fill="none" />
          <path d={`M${s[0] + 1} ${s[1] - 15} V${s[1] - 4} Q${s[0] + 2} ${s[1] + 2} ${s[0] + 8} ${s[1] + 7}`} stroke="#e8a820" fill="none" strokeWidth="1.200" />
          <line x1={s[0] + 2} y1={s[1] - 3} x2={s[0] + 20} y2={s[1] + 9} stroke="#1010ee" strokeWidth=".9" />
        </g>
      ))}
      {[[700, 390, 763, 556], [712, 420, 770, 535], [780, 470, 750, 553], [868, 458, 900, 542], [913, 472, 930, 510], [770, 462, 745, 540]].map((l, i) => (
        <line key={i} x1={l[0]} y1={l[1]} x2={l[2]} y2={l[3]} stroke="#1010ee" />
      ))}
      <path d="M745 515 738 530M770 535 760 548" stroke="#e8a820" strokeWidth="1.200" />

      {Array.from({ length: 38 }, (_, i) => {
        const x = 957 + i * 3;
        const top = x < 1002 ? 473 + (x - 957) * 0.09 : 477 + (x - 1002) * 0.385;
        const bottom = 486 + (x - 957) * 0.18;
        return (
          <g key={i}>
            <path d={`M${x} ${top} L${x + 5} ${bottom + 1}`} stroke={i > 11 && i < 22 ? "#eec24a" : "#f7d8e6"} strokeWidth="1.500" />
            <path d={`M${x - 4} ${top - 5} L${x + 3} ${top + 3}`} stroke="#1010ee" strokeWidth="1" />
          </g>
        );
      })}
      <path d="M1030 497 1062 507 1068 505 1060 511 1040 506Z" fill="#f7d8e6" />
      <circle cx="944" cy="452" r="8" fill="none" stroke="#e8a820" />
      <path d="M925 455c3 10 18 12 26 2" fill="none" stroke="#f7d8e6" strokeWidth="2" />
      <path d="M924 454c2 5 5 8 10 9" fill="none" stroke="#e8a820" strokeWidth="2" />
      <path d="M938 470 952 478" stroke="#2fe8e8" />

      {red.map((l, i) => (
        <line key={i} x1={l[0]} y1={l[1]} x2={l[2]} y2={l[3]} stroke="#ee1020" strokeWidth={l[4] ?? 1} />
      ))}

      <path d="M472 728 479 700 483 686 484 700Z" fill="#3aa83a" />
      <line x1="483" y1="688" x2="489" y2="660" stroke="#3aa83a" strokeWidth="1.500" />
      <path d="M495 645 487 661 493 660Z" fill="#3aa83a" />
      <path d="M472 728 458 700 466 707Z" fill="#1133cc" />
      <line x1="460" y1="698" x2="451" y2="678" stroke="#1133cc" strokeWidth="1.500" />
      <path d="M447 667 450 682 456 677Z" fill="#1133cc" />
      <path d="M472 727 497 727 520 729 497 731Z" fill="#c43030" />
      <line x1="515" y1="729" x2="552" y2="731" stroke="#c43030" strokeWidth="1.200" />
      <path d="M570 732 550 727 550 735Z" fill="#c43030" />
      <g fontFamily="'Liberation Sans',sans-serif" fontSize="13">
        <text x="471" y="641" fill="#2e8b2e">YM</text>
        <text x="449" y="664" fill="#1a3fd8">ZM</text>
        <text x="463" y="680" fill="#2e8b2e">YC</text>
        <text x="461" y="693" fill="#1a3fd8">ZC</text>
        <text x="510" y="743" fill="#b02c2c">XC</text>
        <text x="554" y="745" fill="#b02c2c">XM</text>
      </g>

      {bladeColors.map((c, i) => {
        const v0 = hexPt(36, i);
        const v1 = hexPt(36, i + 1);
        const n0 = hexPt(20, i);
        const n1 = hexPt(20, i + 1);
        const c1 = hexPt(27, i + 1.5);
        const c0 = hexPt(27, i + 0.5);
        return (
          <path key={i} d={`M${v0[0]} ${v0[1]} L${v1[0]} ${v1[1]} Q${c1[0]} ${c1[1]} ${n1[0]} ${n1[1]} L${n0[0]} ${n0[1]} Q${c0[0]} ${c0[1]} ${v0[0]} ${v0[1]}Z`} fill={c} stroke="#232529" strokeWidth=".6" />
        );
      })}
      <path d="M942 810 964 822V848L942 860 920 848V822Z" fill="#2a2c30" />
      <path d="M942 817 927 826V845L942 853V834Z" fill="#447ea0" />
      <path d="M942 817 958 826 942 834 927 826Z" fill="#6a90a6" />
      <path d="M942 834 958 826V845L942 853Z" fill="#156d9d" />
      <text x="985" y="840" fontFamily="'Liberation Sans',sans-serif" fontWeight="700" fontSize="46" fill="#85888b">3D</text>
      <text x="1049" y="839" fontFamily="'Noto Sans CJK SC',sans-serif" fontWeight="700" fontSize="39" fill="#85888b">世界网</text>
      <text x="988" y="861" fontFamily="'Liberation Sans',sans-serif" fontWeight="700" fontSize="13" textLength={174} lengthAdjust="spacingAndGlyphs" fill="#85888b">WWW.3DSJW.COM</text>
    </svg>
  </div>
);

export default function App() {
  return (
    <div className="w-[1189px] h-[889px] flex overflow-hidden bg-white font-['Noto_Sans_CJK_SC','Liberation_Sans',sans-serif]">
      <Panel />
      <main className="flex-1 min-w-0 flex flex-col overflow-hidden">
        <div className="h-5 shrink-0 bg-white" />
        <div className="h-[27px] shrink-0 bg-[#c8d7d5] -ml-[22px] flex items-center text-[12px] text-[#222] whitespace-nowrap">
          帮助(<span className="underline">H</span>)
        </div>
        <Toolbar />
        <Ribbon />
        <div className="h-[31px] shrink-0 bg-white" />
        <div className="h-px shrink-0 bg-[#8f8f8f]" />
        <div className="h-px shrink-0 bg-[#d8a060]" />
        <Canvas />
      </main>
    </div>
  );
}
